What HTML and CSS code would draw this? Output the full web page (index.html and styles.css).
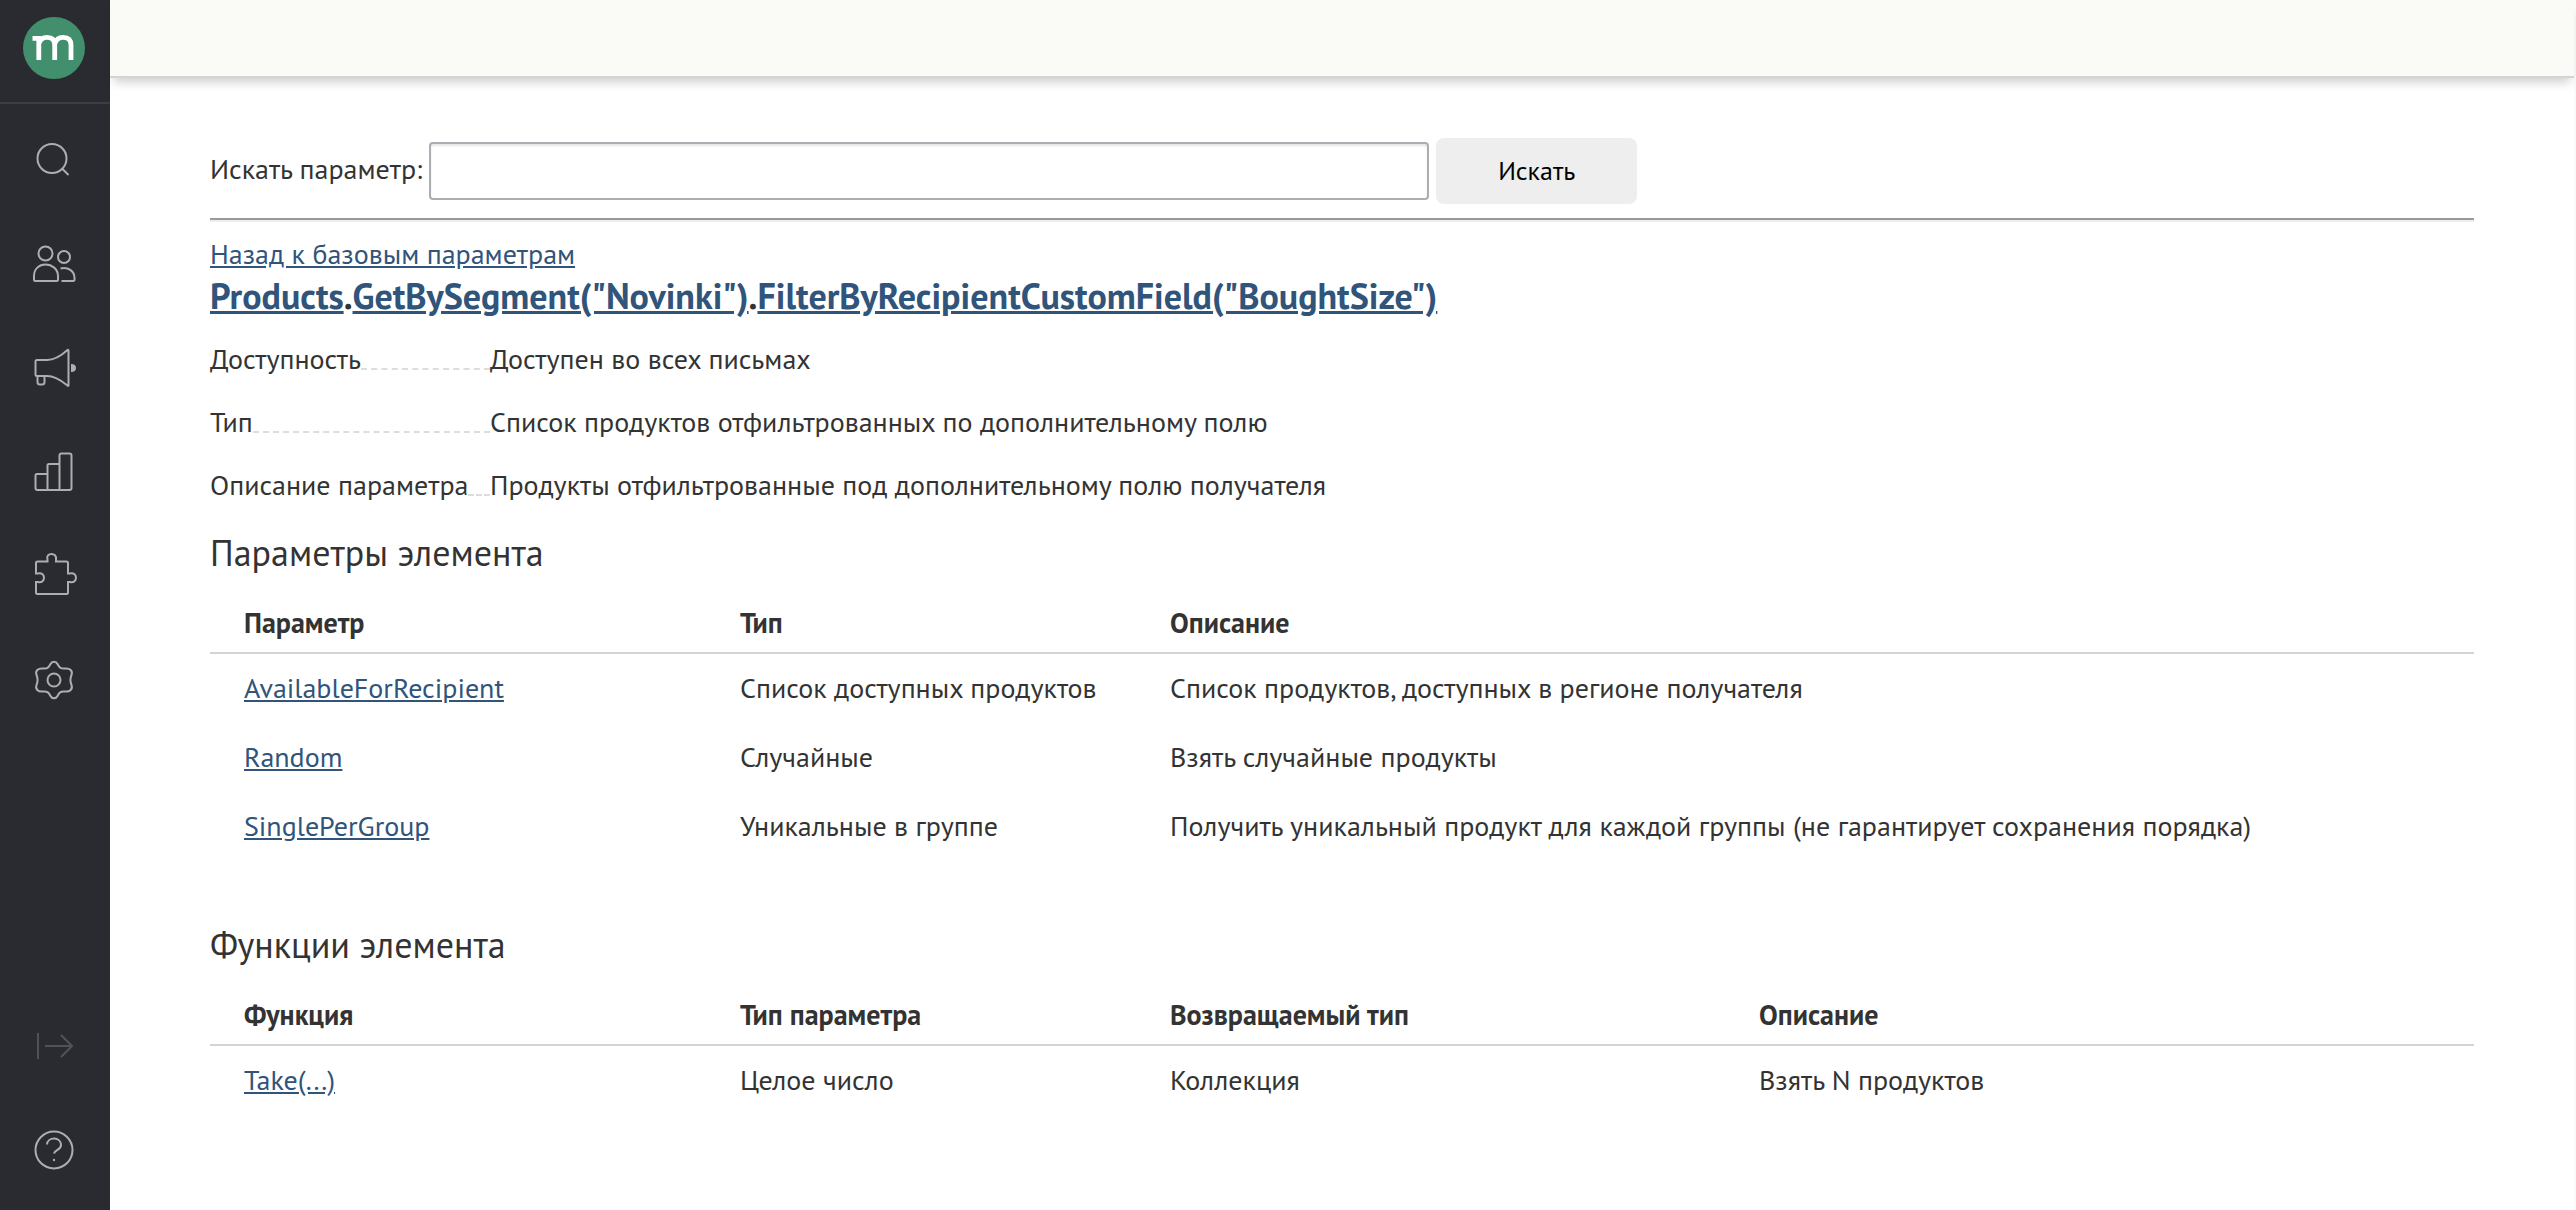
FILE: index.html
```
<!DOCTYPE html>
<html lang="ru">
<head>
  <meta charset="utf-8">
  <title>Параметры</title>
  <link rel="stylesheet" href="styles.css">
</head>
<body>
  <div class="app">
    <nav class="sidebar" aria-label="Главное меню">
      <a class="logo" href="#" aria-label="Главная">
        <svg width="64" height="64" viewBox="0 0 64 64">
          <circle cx="32" cy="32" r="31" fill="#428f6d"/>
          <path d="M10.500 22.300H16.800V44M16.800 28C18 23.500 21 21.300 25 21.300C30.500 21.300 32.700 24 32.700 29V44M32.700 28C34 23.500 37 21.300 41 21.300C46.500 21.300 49 24 49 29V44" fill="none" stroke="#fff" stroke-width="4.800"/>
        </svg>
      </a>
      <ul class="menu">
        <li><a class="menu-link" href="#" aria-label="Поиск">
          <svg class="icon" viewBox="0 0 48 48"><circle cx="22" cy="22.500" r="14.500"/><path d="M32 32.500l6.500 6.500"/></svg>
        </a></li>
        <li><a class="menu-link" href="#" aria-label="Клиенты">
          <svg class="icon" viewBox="0 0 48 48"><circle cx="15.500" cy="13.500" r="7"/><circle cx="34" cy="17" r="6"/><path d="M4 39.500V36C4 29 9 24.500 15.500 24.500S28 29 28 36V39.500Q28 41 26.500 41H5.500Q4 41 4 39.500zM30.500 28.500C38 26.500 44.500 31 44.500 38V39.500Q44.500 41 43 41H31.500"/></svg>
        </a></li>
        <li><a class="menu-link" href="#" aria-label="Рассылки">
          <svg class="icon" viewBox="0 0 48 48"><path d="M7 16H17C25 16 32 11 37.500 6Q38.500 5.500 38.500 7V41Q38.500 42.500 37.500 41.500C32 37 25 32 17 32H7Q5.500 32 5.500 30.500V17.500Q5.500 16 7 16zM7.500 32V38Q7.500 40.500 10 40.500H12Q14.500 40.500 14.500 38V32"/><path class="solid" d="M41 20Q46 20 46 24T41 28z"/></svg>
        </a></li>
        <li><a class="menu-link" href="#" aria-label="Отчёты">
          <svg class="icon" viewBox="0 0 48 48"><path d="M5.500 40V27.500Q5.500 26 7 26H17.500V42H7.500Q5.500 42 5.500 40zM17.500 26V17.500Q17.500 16 19 16H29.500V42H17.500M29.500 16V7.500Q29.500 5.500 31.500 5.500H39.500Q41.500 5.500 41.500 7.500V40Q41.500 42 39.500 42H29.500"/></svg>
        </a></li>
        <li><a class="menu-link" href="#" aria-label="Интеграции">
          <svg class="icon" viewBox="0 0 48 48"><path d="M7.500 9.500H17.500V7.500C15 0 27.500 0 26 7.500V9.500H36.500Q38 9.500 38 11V21.500H40C48 19.500 48 32 40 30H38V40.500Q38 42 36.500 42H7.500Q6 42 6 40.500V30H8C16 32 16 19.500 8 21.500H6V11Q6 9.500 7.500 9.500z"/></svg>
        </a></li>
        <li><a class="menu-link" href="#" aria-label="Настройки">
          <svg class="icon" viewBox="0 0 48 48"><circle cx="24" cy="24" r="6.500"/><path d="M20.500 8C22 5 26 5 27.500 8C29.500 12 31 13 35 12.500C40 12 43 15 41.500 19C40 22.500 40 25.500 41.500 29C43 33 40 36 35 35.500C31 35 29.500 36 27.500 40C26 43 22 43 20.500 40C18.500 36 17 35 13 35.500C8 36 5 33 6.500 29C8 25.500 8 22.500 6.500 19C5 15 8 12 13 12.500C17 13 18.500 12 20.500 8z"/></svg>
        </a></li>
      </ul>
      <ul class="menu menu-bottom">
        <li><a class="menu-link faded" href="#" aria-label="Развернуть меню">
          <svg class="icon" viewBox="0 0 48 48"><path d="M8 11V37M15 24H42M31 13L42 24L31 35"/></svg>
        </a></li>
        <li><a class="menu-link" href="#" aria-label="Помощь">
          <svg class="icon" viewBox="0 0 48 48"><circle cx="24" cy="24" r="18.500"/><path d="M17 18.500C17.500 10.500 31 10.500 31 19C31 24 24.500 24 24 27.500"/><circle class="solid" cx="24" cy="34" r="1.200"/></svg>
        </a></li>
      </ul>
    </nav>
    <div class="page">
      <header class="topbar"></header>
      <main class="content">
        <form class="search">
          <label class="search-label" for="query">Искать параметр:</label>
          <input class="search-input" id="query" type="text">
          <button class="search-button" type="submit">Искать</button>
        </form>
        <hr class="rule">
        <a href="#">Назад к базовым параметрам</a>
        <h1 class="title"><a href="#">Products</a>.<a href="#">GetBySegment("Novinki")</a>.<a href="#">FilterByRecipientCustomField("BoughtSize")</a></h1>
        <dl class="props">
          <dt class="prop-name">Доступность</dt><dd class="prop-value">Доступен во всех письмах</dd>
          <dt class="prop-name">Тип</dt><dd class="prop-value">Список продуктов отфильтрованных по дополнительному полю</dd>
          <dt class="prop-name">Описание параметра</dt><dd class="prop-value">Продукты отфильтрованные под дополнительному полю получателя</dd>
        </dl>
        <section class="section">
          <h2 class="heading">Параметры элемента</h2>
          <table class="table">
            <colgroup><col class="col-name"><col class="col-type"><col></colgroup>
            <thead><tr><th>Параметр</th><th>Тип</th><th>Описание</th></tr></thead>
            <tbody>
              <tr><td><a href="#">AvailableForRecipient</a></td><td>Список доступных продуктов</td><td>Список продуктов, доступных в регионе получателя</td></tr>
              <tr><td><a href="#">Random</a></td><td>Случайные</td><td>Взять случайные продукты</td></tr>
              <tr><td><a href="#">SinglePerGroup</a></td><td>Уникальные в группе</td><td>Получить уникальный продукт для каждой группы (не гарантирует сохранения порядка)</td></tr>
            </tbody>
          </table>
        </section>
        <section class="section">
          <h2 class="heading">Функции элемента</h2>
          <table class="table">
            <colgroup><col class="col-name"><col class="col-type"><col class="col-result"><col></colgroup>
            <thead><tr><th>Функция</th><th>Тип параметра</th><th>Возвращаемый тип</th><th>Описание</th></tr></thead>
            <tbody>
              <tr><td><a href="#">Take(...)</a></td><td>Целое число</td><td>Коллекция</td><td>Взять N продуктов</td></tr>
            </tbody>
          </table>
        </section>
      </main>
    </div>
  </div>
</body>
</html>
```
FILE: styles.css
```
* {
  box-sizing: border-box;
}

body {
  margin: 0;
  background: #fff;
  color: #333;
  font: 28px/36px "PT Sans", "Noto Sans", sans-serif;
}

a {
  color: #30547a;
}

.app {
  display: flex;
  min-height: 100vh;
}

/* Sidebar */

.sidebar {
  display: flex;
  flex: none;
  flex-direction: column;
  width: 110px;
  background: #2a2b30;
}

.logo {
  display: flex;
  height: 104px;
  padding: 16px 22px;
  border-bottom: 2px solid #3d3e43;
}

.menu {
  margin: 4px 0 0;
  padding: 0;
  list-style: none;
}

.menu-bottom {
  margin: auto 0 8px;
}

.menu-link {
  display: flex;
  align-items: center;
  justify-content: center;
  height: 104px;
  padding-right: 2px;
}

.icon {
  width: 48px;
  height: 48px;
  fill: none;
  stroke: #adaeb0;
  stroke-width: 2;
}

.icon .solid {
  fill: #adaeb0;
  stroke: none;
}

.faded {
  opacity: 0.3;
}

/* Page */

.page {
  flex: 1;
  min-width: 0;
  border-right: 2px solid #fafafa;
}

.topbar {
  height: 78px;
  border-bottom: 2px solid #d4d4d2;
  background: #fafbf6;
  box-shadow: 0 8px 10px -4px rgba(0, 0, 0, 0.2);
}

.content {
  padding: 60px 100px 0;
}

.search {
  display: flex;
  align-items: center;
  gap: 7px;
}

.search-label {
  padding-bottom: 5px;
}

.search-input {
  width: 1000px;
  height: 58px;
  padding: 0 12px;
  border: 2px solid #acacb3;
  border-radius: 4px;
  box-shadow: inset 0 2px 2px rgba(0, 0, 0, 0.1);
  font: inherit;
}

.search-button {
  width: 201px;
  height: 66px;
  border: 0;
  border-radius: 8px;
  background: #eee;
  color: #000;
  font: inherit;
  font-size: 26px;
}

.rule {
  height: 4px;
  margin: 14px 0;
  border: 0;
  border-top: 2px solid #999;
  border-bottom: 2px solid #eee;
}

.title {
  margin: 0;
  font-size: 36px;
  line-height: 48px;
}

.props {
  display: grid;
  grid-template-columns: 280px 1fr;
  row-gap: 27px;
  margin: 21px 0 26px;
}

.prop-name {
  display: flex;
}

.prop-name::after {
  flex: 1;
  height: 27px;
  border-bottom: 2px dashed #ddd;
  content: "";
}

.prop-value {
  margin: 0;
}

.section {
  margin-bottom: 61px;
}

.section:last-child {
  margin-bottom: 0;
}

.heading {
  margin: 0 0 16px;
  font-size: 36px;
  font-weight: 400;
  line-height: 48px;
}

.table {
  width: 100%;
  border-collapse: collapse;
  table-layout: fixed;
}

.table th,
.table td {
  height: 69px;
  padding: 0 34px;
  text-align: left;
}

.table th {
  height: 60px;
  border-bottom: 2px solid #d4d4d4;
}

.col-name {
  width: 496px;
}

.col-type {
  width: 430px;
}

.col-result {
  width: 589px;
}
```
